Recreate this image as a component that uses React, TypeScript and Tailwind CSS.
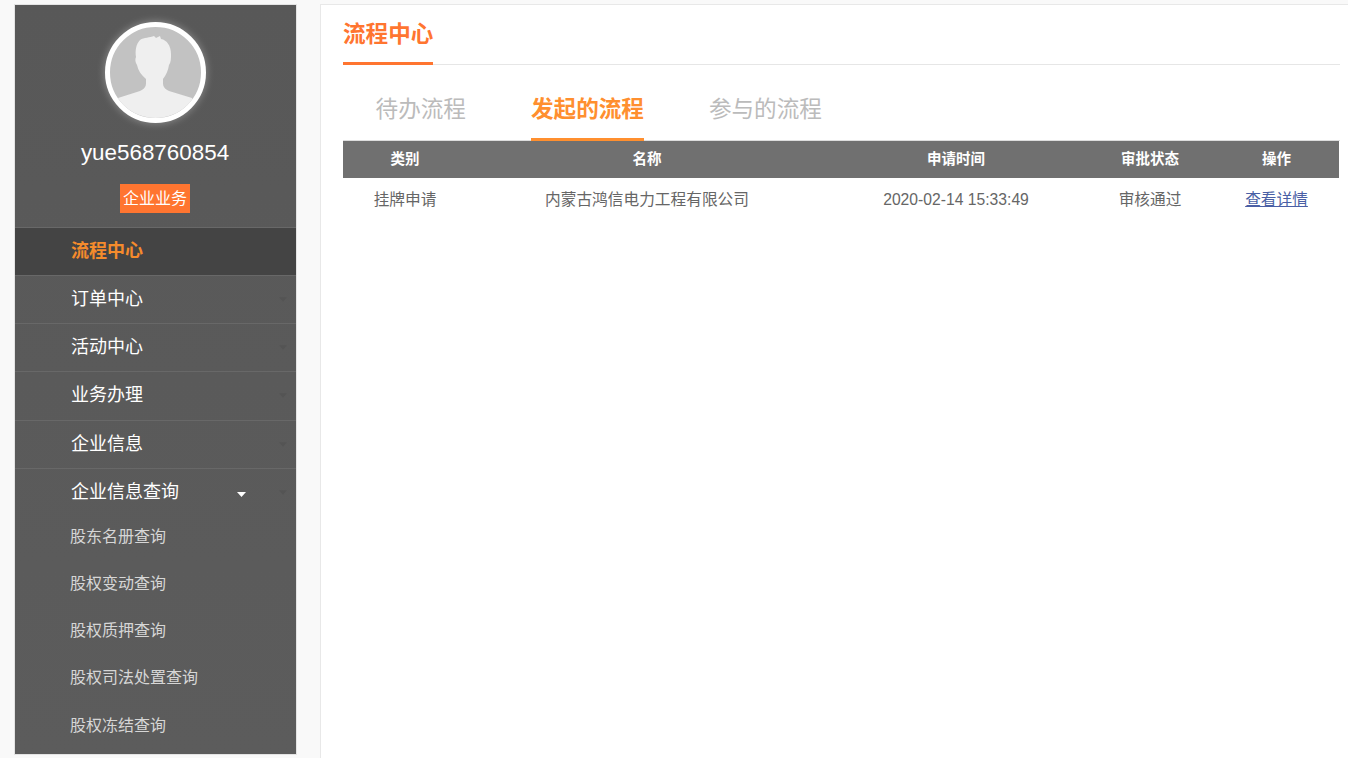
const font = { fontFamily: '"Liberation Sans", "Noto Sans CJK SC", sans-serif' };

function Caret({ className }: { className: string }) {
  return (
    <svg viewBox="0 0 9 5" className={className}>
      <path d="M0 0H9L4.5 5Z" fill="currentColor" />
    </svg>
  );
}

function Avatar() {
  return (
    <div className="h-[101px] w-[101px] overflow-hidden rounded-full border-[5px] border-white bg-[#c2c2c2] shadow-[0_0_8px_rgba(255,255,255,0.35)]">
      <svg viewBox="0 0 91 91" className="h-full w-full">
        <path
          d="M8 71 L30 64 C34 62 36 60 36 56 L36 52 C31 48 28 43 27 38 C25 35 25 32 26 30 C25 24 26 17 30 13 C34 10 40 11 44 9 L46 11 L50 9 L51 12 C57 13 61 19 61 27 C61 32 61 35 59 38 C58 44 56 48 53 52 L53 56 C53 60 55 62 59 64 L82 71 L91 91 L0 91 Z"
          fill="#efefef"
        />
      </svg>
    </div>
  );
}

const menu = ['订单中心', '活动中心', '业务办理', '企业信息'];
const sub = ['股东名册查询', '股权变动查询', '股权质押查询', '股权司法处置查询', '股权冻结查询'];
const cols = 'grid grid-cols-[124px_360px_258px_130px_123px]';

function MenuRow({ label, open }: { label: string; open?: boolean }) {
  return (
    <div className="flex h-[48.2px] items-center border-t border-[#686868] pl-[56px] text-[18px] text-white">
      <span className="flex-1">{label}</span>
      {open && <Caret className="mr-[33px] mt-1 h-[5px] w-[9px] text-white" />}
      <Caret className="mr-[9px] h-[5px] w-[8px] text-[#545454]" />
    </div>
  );
}

export default function App() {
  return (
    <div style={font} className="flex h-[758px] overflow-hidden bg-[#f9f9f9]">
      <aside className="ml-[14px] mt-[4px] flex h-[751px] w-[283px] shrink-0 flex-col border border-[#e4e4e4] bg-[#5a5a5a] bg-gradient-to-b from-[#585858] to-[#5c5c5c]">
        <div className="flex h-[222px] flex-col items-center pt-[17px]">
          <Avatar />
          <div className="mr-[1px] mt-[14px] text-[22.4px] leading-[32px] text-white">yue568760854</div>
          <div className="mr-[1px] mt-[15px] flex h-[29px] w-[70px] items-center justify-center bg-[#ff7530] text-[16px] text-white">
            企业业务
          </div>
        </div>
        <div className="flex h-[48px] items-center border-t border-[#686868] bg-[#444444] pl-[56px] text-[18px] font-bold text-[#f58b2c]">
          流程中心
        </div>
        {menu.map((m) => (
          <MenuRow key={m} label={m} />
        ))}
        <MenuRow label="企业信息查询" open />
        <div className="-mt-[3px] flex flex-col">
          {sub.map((s) => (
            <div key={s} className="flex h-[47.3px] items-center pl-[55px] text-[16px] text-[#d6d6d6]">
              {s}
            </div>
          ))}
        </div>
      </aside>

      <main className="ml-[23px] mt-[4px] flex-1 border-l border-t border-[#e8e8e8] bg-white pl-[22px] pr-[8px]">
        <div className="h-[60px] border-b border-[#e6e6e6]">
          <div className="inline-block h-[60px] border-b-[3px] border-[#ff7530] pt-[15px] text-[22.6px] font-bold leading-[30px] text-[#ff7530]">
            流程中心
          </div>
        </div>
        <div className="flex h-[76px] gap-[65px] border-b border-[#dddddd] pl-[32.6px] text-[22.6px] leading-[30px] text-[#bbbbbb]">
          <div className="pt-[30px]">待办流程</div>
          <div className="h-[76px] border-b-[3px] border-[#ff8f2f] pt-[30px] font-bold text-[#ff8f2f]">发起的流程</div>
          <div className="pt-[30px]">参与的流程</div>
        </div>
        <div className={`${cols} h-[37px] w-[996px] items-center bg-[#707070] text-center text-[14.5px] font-bold text-white`}>
          <div>类别</div>
          <div>名称</div>
          <div>申请时间</div>
          <div>审批状态</div>
          <div>操作</div>
        </div>
        <div className={`${cols} h-[44px] w-[996px] items-center text-center text-[15.7px] text-[#666666]`}>
          <div>挂牌申请</div>
          <div>内蒙古鸿信电力工程有限公司</div>
          <div>2020-02-14 15:33:49</div>
          <div>审核通过</div>
          <a className="text-[#4a5fa5] underline">查看详情</a>
        </div>
      </main>
    </div>
  );
}
